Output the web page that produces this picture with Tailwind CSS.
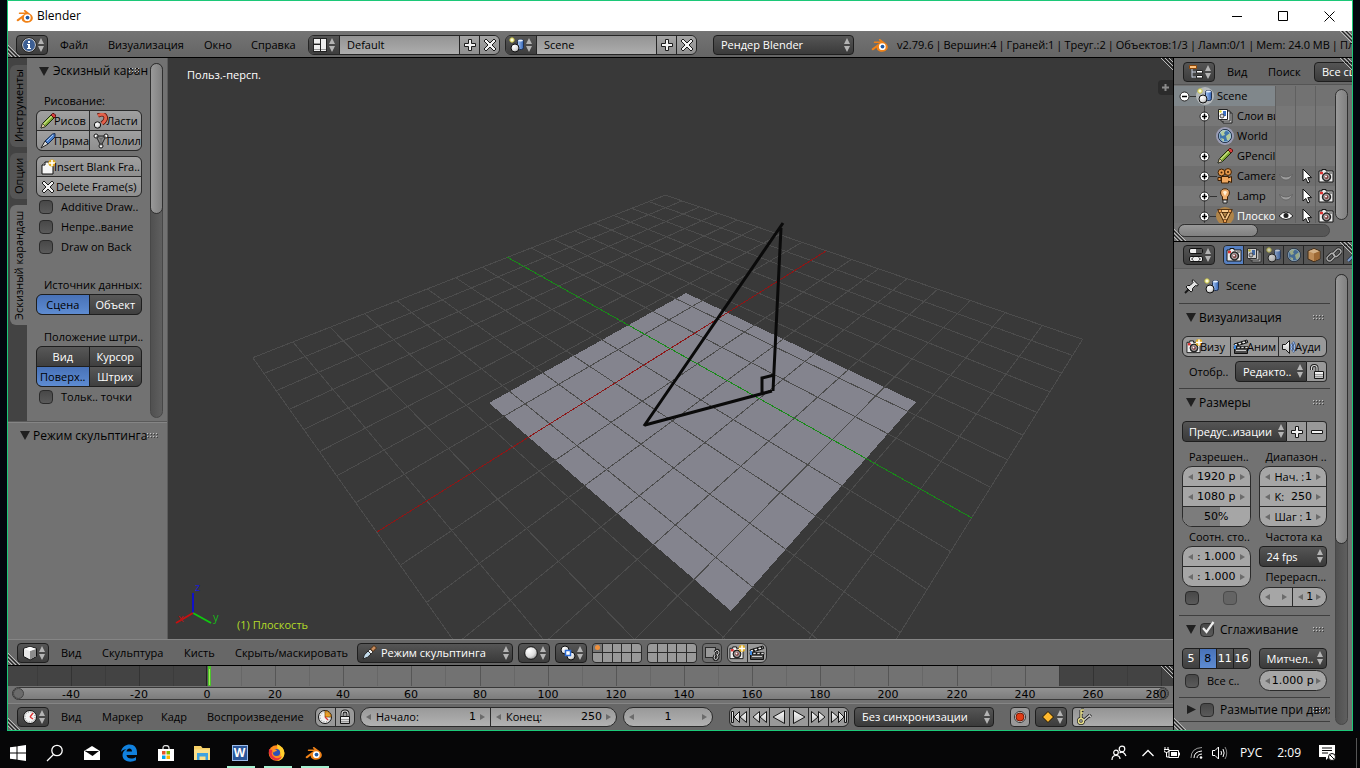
<!DOCTYPE html>
<html lang="ru">
<head>
<meta charset="utf-8">
<title>Blender</title>
<script src="https://cdn.jsdelivr.net/npm/@tailwindcss/browser@4"></script>
</head>
<body class="flex h-screen flex-col overflow-hidden bg-[#03060e] font-['Open_Sans','Noto_Sans',sans-serif] text-[11px] leading-4 text-black select-none">

<svg class="absolute size-0" aria-hidden="true">
  <defs>
    <radialGradient id="ball" cx=".35" cy=".3" r=".8"><stop offset="0" stop-color="#fff"/><stop offset=".6" stop-color="#ddd"/><stop offset="1" stop-color="#888"/></radialGradient>
    <linearGradient id="steel" x1="0" y1="0" x2="0" y2="1"><stop offset="0" stop-color="#fff"/><stop offset="1" stop-color="#bbb"/></linearGradient>
    <linearGradient id="cyl" x1="0" x2="1"><stop offset="0" stop-color="#a9c8f5"/><stop offset="1" stop-color="#2f62b5"/></linearGradient>
    <symbol id="ud" viewBox="0 0 8 14"><path d="M4 0 7 6H1ZM4 14 7 8H1Z" fill="#b4b4b4"/></symbol>
    <symbol id="down" viewBox="0 0 10 9"><path d="M0 0H10L5 9Z" fill="#202020"/></symbol>
    <symbol id="right" viewBox="0 0 10 9"><path d="M1 0V9L10 4.500Z" fill="#202020"/></symbol>
    <symbol id="lt" viewBox="0 0 5 6"><path d="M5 0V6L0 3Z" fill="#6b6b6b"/></symbol>
    <symbol id="rt" viewBox="0 0 5 6"><path d="M0 0V6L5 3Z" fill="#6b6b6b"/></symbol>
    <symbol id="grip" viewBox="0 0 12 6"><path d="M1 1.500h1M4 1.500h1M7 1.500h1M10 1.500h1M1 4.500h1M4 4.500h1M7 4.500h1M10 4.500h1" stroke="#3d3d3d"/><path d="M0 .5h1M3 .5h1M6 .5h1M9 .5h1M0 3.500h1M3 3.500h1M6 3.500h1M9 3.500h1" stroke="#c4c4c4"/></symbol>
    <symbol id="corner" viewBox="0 0 12 12"><path d="M0 0 12 12M4 0 12 8M8 0 12 4" stroke="#bbb" stroke-width="1"/><path d="M2 0 12 10M6 0 12 6" stroke="#222" stroke-width="1"/></symbol>
    <symbol id="cornerbl" viewBox="0 0 12 12"><path d="M0 0 12 12M0 4 8 12M0 8 4 12" stroke="#bbb"/><path d="M0 2 10 12M0 6 6 12" stroke="#222"/></symbol>
    <symbol id="plus" viewBox="0 0 16 16"><path d="M6.500 2.500h3v4h4v3h-4v4h-3v-4h-4v-3h4z" fill="#f2f2f2" stroke="#1a1a1a"/></symbol>
    <symbol id="minus" viewBox="0 0 16 16"><path d="M2.500 6.500h11v3h-11z" fill="#f2f2f2" stroke="#1a1a1a"/></symbol>
    <symbol id="cross" viewBox="0 0 16 16"><path d="m4 2 4 4 4-4 2 2-4 4 4 4-2 2-4-4-4 4-2-2 4-4-4-4z" fill="#f2f2f2" stroke="#1a1a1a"/></symbol>
    <symbol id="info" viewBox="0 0 16 16"><circle cx="8" cy="8" r="6.500" fill="#3d5f94" stroke="#e9e9e9"/><circle cx="8" cy="8" r="7.300" fill="none" stroke="#151515" stroke-width=".7"/><path d="M7 4h2v2H7zM6 7h3v4h1v1H6v-1h1V8H6z" fill="#fff"/></symbol>
    <symbol id="layout" viewBox="0 0 16 16"><rect x="1" y="1" width="14" height="14" fill="#222"/><path d="M2 2h6v5H2zM2 8h6v6H2zM9 2h5v12H9z" fill="#eee"/><path d="M9 12.500h5M2 12.500h6M2 6.500h6" stroke="#999"/></symbol>
    <symbol id="scene" viewBox="0 0 16 16"><rect x="8.500" y="2.500" width="6" height="10" rx="2" fill="url(#cyl)" stroke="#1e2f50"/><ellipse cx="11.500" cy="3.500" rx="2.500" ry="1" fill="#e8f2ff"/><circle cx="6" cy="11" r="4" fill="url(#ball)" stroke="#111"/><circle cx="3" cy="3" r="2.200" fill="#fdfdd8" stroke="#c8c23e"/></symbol>
    <symbol id="blender" viewBox="0 0 18 16"><path d="M1 11.500 8.500 6H3.500c-1 0-1-1.600 0-1.600h6L8 3.200C7.400 2.500 8.300 1.600 9.100 2.100L15 6.500c3.300 2.600 2.200 8-3.700 8.200-3.200.1-5.700-1.900-5.700-4.300L3 12.800c-1.200.9-3-.2-2-1.300z" fill="#f08218"/><circle cx="11.300" cy="9.700" r="3.400" fill="#fff"/><circle cx="11.500" cy="9.600" r="1.900" fill="#1f5aa5"/></symbol>
    <symbol id="pencil" viewBox="0 0 16 16"><path d="M1 15 2.500 10.500 11 2l3 3-8.500 8.500z" fill="#7ea832" stroke="#1c2b08"/><path d="m3 11 8.500-8.500 1 1L4 12z" fill="#c5df7d"/><path d="M1 15l1.500-4.500L5.500 13.500z" fill="#ecd7a8" stroke="#222" stroke-width=".7"/><path d="m11 2 1.500-1.500h1.500L15.500 2v1.500L14 5z" fill="#d8403c" stroke="#511"/></symbol>
    <symbol id="eraser" viewBox="0 0 16 16"><path d="M5 2.500C12-1 16 5 9 10.500" fill="none" stroke="#5a150c" stroke-width="4.500"/><path d="M5 2.500C12-1 16 5 9 10.500" fill="none" stroke="#e2614b" stroke-width="2.800"/><circle cx="4.500" cy="12" r="3.200" fill="url(#ball)" stroke="#111"/></symbol>
    <symbol id="knife" viewBox="0 0 16 16"><path d="M1 15 5 8l3 3z" fill="#ddd" stroke="#222"/><path d="M5 8 12.500 1 15 .5V4L8 11z" fill="#4b80cc" stroke="#14294c"/><path d="m7 8 6-6" stroke="#a8c9f5"/></symbol>
    <symbol id="poly" viewBox="0 0 16 16"><path d="M3 3h10L8 13z" fill="#888" stroke="#222"/><circle cx="3" cy="3" r="2" fill="#fff" stroke="#111"/><circle cx="13" cy="3" r="2" fill="#fff" stroke="#111"/><circle cx="8" cy="13" r="2" fill="#fff" stroke="#111"/><path d="M3 3l5 3 5-3M8 6v7" stroke="#444" stroke-width=".6" fill="none"/></symbol>
    <symbol id="newpage" viewBox="0 0 16 16"><path d="M5 3h8v12H2V6z" fill="#f6f6f6" stroke="#111"/><path d="M5 3v3H2" fill="#ccc" stroke="#111"/><circle cx="12" cy="4" r="3.600" fill="#e0ad20"/><path d="M12 1v6M9 4h6" stroke="#fff" stroke-width="1.600"/></symbol>
    <symbol id="tree" viewBox="0 0 16 16"><path d="M4 5v8.500M4 8h5M4 13h5" stroke="#c4ccdc" fill="none"/><path d="M1.500 1.500h7v3h-7z" fill="#ffc07a" stroke="#8b4608"/><path d="M8.500 6.500h6v2.500h-6zM8.500 11.500h6v2.500h-6z" fill="#fff" stroke="#222"/></symbol>
    <symbol id="rlayers" viewBox="0 0 16 16"><path d="M6 5h9v10H6z" fill="#ccc" stroke="#222"/><path d="M4 3h9v10H4z" fill="#eee" stroke="#222"/><path d="M1.500 1.500h9v10h-9z" fill="#fff" stroke="#222"/><rect x="6" y="3" width="3" height="5" fill="#3c72c4"/><circle cx="5" cy="8" r="2" fill="#ddd" stroke="#222" stroke-width=".8"/><circle cx="3.500" cy="3.500" r="1.200" fill="#e0da30"/></symbol>
    <symbol id="world" viewBox="0 0 16 16"><circle cx="8" cy="8" r="6.500" fill="#3f74ac" stroke="#15263a"/><path d="M3 4q3-3 6-1.500L7 5 8 7 5 8zM9 8l4-3 1 4-2.500 3.500L10 12zM4 10l3 1v2.500q-2 0-3-3.500z" fill="#b5cc9c"/><circle cx="8" cy="8" r="5.700" fill="none" stroke="#b4d4ee" stroke-width=".7"/></symbol>
    <symbol id="moviecam" viewBox="0 0 16 16"><circle cx="4.500" cy="4.500" r="3.400" fill="#e89a4c" stroke="#3f2104"/><circle cx="11" cy="4" r="3.400" fill="#e89a4c" stroke="#3f2104"/><circle cx="4.500" cy="4.500" r="1" fill="#3f2104"/><circle cx="11" cy="4" r="1" fill="#3f2104"/><path d="M4.500 8.500h7v1.500l3-1.500v6l-3-1.500V15h-7z" fill="#f0a860" stroke="#3f2104"/><path d="M1 9.500h3v3H1z" fill="#e89a4c" stroke="#3f2104"/></symbol>
    <symbol id="bulb" viewBox="0 0 16 16"><path d="M8 .8c-5 0-5.600 5-2.500 8V12h5V8.800C13.600 5.800 13 .8 8 .8z" fill="#f0b070" stroke="#3f2104"/><path d="M6 4q2-2 4 0L8 8z" fill="#fff0d8"/><path d="M6 12h4v3H6z" fill="#ddd" stroke="#222"/></symbol>
    <symbol id="mesh" viewBox="0 0 16 16"><path d="M3 3h10L8 13z" fill="none" stroke="#3a1d02" stroke-width="3.500"/><path d="M3 3h10L8 13z" fill="none" stroke="#f5c88c" stroke-width="1.800"/><path d="M1.500 1.500h3v3h-3zM11.500 1.500h3v3h-3zM6.500 11.500h3v3h-3z" fill="#f0a050" stroke="#3a1d02" stroke-width=".6"/></symbol>
    <symbol id="eye" viewBox="0 0 16 16"><path d="M1 8q7-8 14 0-7 7-14 0z" fill="#fff" stroke="#222"/><circle cx="8" cy="7.500" r="2.500" fill="#222"/></symbol>
    <symbol id="eyeoff" viewBox="0 0 16 16"><path d="M1.500 6.500q6.500 5 13 0-2 5.500-6.500 5.500T1.500 6.500z" fill="#9c9c9c" stroke="#5a5a5a" stroke-width=".7"/></symbol>
    <symbol id="cursor" viewBox="0 0 16 16"><path d="M5 1v12l2.800-2.600L9.800 15l2-1-2-4.400h3.700z" fill="#fff" stroke="#111"/></symbol>
    <symbol id="camera" viewBox="0 0 16 16"><path d="M1 3h3V1.500h4V3h7v11H1z" fill="#ececec" stroke="#161616"/><rect x="2" y="3.800" width="3" height="2.500" fill="#d33"/><path d="M11 5h3" stroke="#333"/><circle cx="8.500" cy="9" r="4.200" fill="#444" stroke="#161616"/><circle cx="8.500" cy="9" r="2.600" fill="#7c4040" stroke="#ccc" stroke-width=".8"/><circle cx="8" cy="8.500" r="1" fill="#fff"/></symbol>
    <symbol id="camplus" viewBox="0 0 16 16"><use href="#camera" width="15" height="16"/><circle cx="13" cy="3.500" r="3.400" fill="#e0ad20"/><path d="M13 .5v6M10 3.500h6" stroke="#fff" stroke-width="1.500"/></symbol>
    <symbol id="clap" viewBox="0 0 16 16"><path d="M1.500 8.500h13v6h-13z" fill="#4a4a4a" stroke="#111"/><path d="M3 11.500h10" stroke="#ccc"/><path d="m1 5 13-4 .8 2.500L1.800 7.500z" fill="#eee" stroke="#111"/><path d="m4 4 1.500 2.200M8 3l1.500 2M12 1.700l1.300 2" stroke="#111" stroke-width="1.600"/><path d="M1 7.500h14v2H1z" fill="#ddd" stroke="#111" stroke-width=".7"/><path d="M4 7.500 3 9.500M8 7.500 7 9.500M12 7.500l-1 2" stroke="#111" stroke-width="1.500"/><path d="M1 6h2v4H1z" fill="#3f8ae0"/></symbol>
    <symbol id="sound" viewBox="0 0 16 16"><path d="M1.500 5.500h3l4-4v13l-4-4h-3z" fill="url(#steel)" stroke="#161616"/><path d="M10 5q2 3 0 6M12 3q3.500 5 0 10" stroke="#2a4c86" stroke-width="2.200" fill="none"/><path d="M10 5q2 3 0 6M12 3q3.500 5 0 10" stroke="#a7c7f6" fill="none"/></symbol>
    <symbol id="unlock" viewBox="0 0 16 16"><path d="M2.500 6V4q0-2.500 2.800-2.500T8 4v4" fill="none" stroke="#161616" stroke-width="3"/><path d="M2.500 6V4q0-2.500 2.800-2.500T8 4v4" fill="none" stroke="#ddd" stroke-width="1.200"/><path d="M5.500 7.500h9v7h-9z" fill="url(#steel)" stroke="#161616"/><path d="M6 10.500h8M6 12.500h8" stroke="#999"/></symbol>
    <symbol id="lock" viewBox="0 0 16 16"><path d="M5 8V5q0-3 3-3t3 3v3" fill="none" stroke="#161616" stroke-width="3"/><path d="M5 8V5q0-3 3-3t3 3v3" fill="none" stroke="#ddd" stroke-width="1.200"/><path d="M3.500 7.500h9v7h-9z" fill="url(#steel)" stroke="#161616"/><path d="M4 10.500h8M4 12.500h8" stroke="#999"/></symbol>
    <symbol id="props" viewBox="0 0 16 16"><rect x="1.500" y="1.500" width="13" height="5" rx="1.500" fill="#eee" stroke="#111"/><rect x="8" y="2" width="6" height="4" fill="#555"/><rect x="1.500" y="9.500" width="13" height="5" rx="1.500" fill="#eee" stroke="#111"/><path d="m5.500 10.500-2 1.500 2 1.500M10.500 10.500l2 1.500-2 1.500" fill="none" stroke="#333"/></symbol>
    <symbol id="cubeo" viewBox="0 0 16 16"><path d="M8 1.500 14 4v8l-6 2.800L2 12V4z" fill="#d89a58" stroke="#3c2208"/><path d="M2.500 4.300 8 6.500l5.500-2.200L8 2z" fill="#f3c994"/><path d="M8 6.500v7.800l5.500-2.500V4.300z" fill="#b06f2e"/></symbol>
    <symbol id="chain" viewBox="0 0 16 16"><g fill="none"><g stroke="#222" stroke-width="3"><rect x="7" y="3.500" width="8.500" height="5" rx="2.500" transform="rotate(-45 11 6)"/><rect x=".5" y="7.500" width="8.500" height="5" rx="2.500" transform="rotate(-45 5 10)"/></g><g stroke="#c8c8c8" stroke-width="1.300"><rect x="7" y="3.500" width="8.500" height="5" rx="2.500" transform="rotate(-45 11 6)"/><rect x=".5" y="7.500" width="8.500" height="5" rx="2.500" transform="rotate(-45 5 10)"/></g></g></symbol>
    <symbol id="wrench" viewBox="0 0 16 16"><path d="M2 14 11 5q-1-3 2-4M14 6q-2 1-3-1" fill="none" stroke="#1c2b4a" stroke-width="3.500"/><path d="M2 14 11 5" stroke="#87aee6" stroke-width="2"/></symbol>
    <symbol id="pin" viewBox="0 0 16 16"><path d="m9 1.500 5.500 5.500-1.500 1-1.500-.5-3 3v2.500L7 14 2 9l1.500-1.500H6l3-3L8 3z" fill="#e4e4e4" stroke="#161616"/><path d="M4.500 11.500 1 15" stroke="#161616" stroke-width="1.800"/></symbol>
    <symbol id="cube" viewBox="0 0 16 16"><path d="M8 1.500 14.500 3.500v8L8 15 1.500 11.500v-8z" fill="#e6e6e6" stroke="#111"/><path d="M8 6v8.500l6-3.300V4z" fill="#8d8d8d"/><path d="M2 3.800 8 6l6-2.200-6-2z" fill="#fff"/></symbol>
    <symbol id="brush" viewBox="0 0 16 16"><path d="M2 14q0-4 5-8l3 3q-3 4-8 5z" fill="#c4dcec" stroke="#222"/><path d="m7 6 2-2 3 3-2 2z" fill="#eee" stroke="#333"/><path d="m9.500 4 3.500-3.500 2.500 2.500L12 6.500z" fill="#c98d5d" stroke="#492a10"/></symbol>
    <symbol id="sphere" viewBox="0 0 16 16"><circle cx="8" cy="8" r="6.300" fill="url(#ball)" stroke="#111"/></symbol>
    <symbol id="pivot" viewBox="0 0 16 16"><circle cx="5" cy="5" r="4" fill="url(#ball)" stroke="#111"/><circle cx="11" cy="11" r="4" fill="url(#ball)" stroke="#111"/><rect x="5.500" y="5.500" width="5" height="5" fill="#fff" stroke="#2c6cd6" stroke-width="1.500"/></symbol>
    <symbol id="linkbox" viewBox="0 0 16 16"><rect x="1.500" y="2.500" width="10" height="10" fill="#999" stroke="#2a2a2a"/><path d="M11 7q2-3 3.500-1t-1 4M13 9q2 3 0 5t-3-1l1-3" fill="none" stroke="#222" stroke-width="3"/><path d="M11 7q2-3 3.500-1t-1 4M13 9q2 3 0 5t-3-1l1-3" fill="none" stroke="#ccc"/></symbol>
    <symbol id="clock" viewBox="0 0 16 16"><circle cx="8" cy="8" r="6.500" fill="#f2f2f2" stroke="#111"/><circle cx="8" cy="8" r="5" fill="none" stroke="#888" stroke-dasharray="1 1.600"/><path d="M8 8 11 4M8 8l3 2" stroke="#d33" stroke-width="1.300"/></symbol>
    <symbol id="clockq" viewBox="0 0 16 16"><circle cx="8" cy="8" r="6.500" fill="#f2f2f2" stroke="#111"/><path d="M8 8V1.800A6.200 6.200 0 0 1 14.200 8z" fill="#f0a020" stroke="#7a4400" stroke-width=".7"/><path d="M8 8l3 3" stroke="#d33" stroke-width="1.300"/><circle cx="8" cy="8" r="4.800" fill="none" stroke="#888" stroke-dasharray="1 1.600"/></symbol>
    <symbol id="first" viewBox="0 0 18 14"><path d="M1.500 1.500h2v11h-2zM9.500 1.500v11L4 7zM16.500 1.500v11L10 7z" fill="url(#steel)" stroke="#161616"/></symbol>
    <symbol id="rew" viewBox="0 0 18 14"><path d="M9.500 1.500v11L3 7zM16.500 1.500v11L10 7z" fill="url(#steel)" stroke="#161616"/></symbol>
    <symbol id="back" viewBox="0 0 18 14"><path d="M14.500 .5v13L3 7z" fill="url(#steel)" stroke="#161616"/></symbol>
    <symbol id="rec" viewBox="0 0 16 16"><circle cx="8" cy="8" r="5.500" fill="#d9d9d9" stroke="#333"/><circle cx="8" cy="8" r="4" fill="#e23c14" stroke="#7c1804"/></symbol>
    <symbol id="diamond" viewBox="0 0 16 16"><path d="M8 2.500 13.500 8 8 13.500 2.500 8z" fill="#ffb92e" stroke="#201400"/></symbol>
    <symbol id="keys" viewBox="0 0 18 18"><circle cx="6" cy="13" r="2.500" fill="none" stroke="#222" stroke-width="3"/><path d="M6 11V2M6 2h3M6 5h2M8 13l7-6M14 7l2 2" stroke="#222" stroke-width="3"/><path d="M8 13l7-6M14 7l2 2" stroke="#ccc" stroke-width="1.500"/><circle cx="6" cy="13" r="2.500" fill="none" stroke="#e8e08c" stroke-width="1.500"/><path d="M6 11V2M6 2h3M6 5h2" stroke="#e8e08c" stroke-width="1.500"/></symbol>
  </defs>
</svg>

<main class="mx-[7px] flex min-h-0 flex-1 flex-col overflow-hidden border border-[#1cc878] bg-[#727272]">
  <!-- Title bar -->
  <div class="flex h-[30px] shrink-0 items-center bg-white pl-2 text-xs">
    <svg class="h-4 w-[18px]"><use href="#blender"/></svg>
    <h1 class="ml-[3px] flex-1">Blender</h1>
    <button class="flex h-full w-[46px] items-center justify-center" aria-label="Свернуть"><svg class="size-[11px]" viewBox="0 0 11 11"><path d="M0 5.500h10" stroke="#000"/></svg></button>
    <button class="flex h-full w-[46px] items-center justify-center" aria-label="Развернуть"><svg class="size-[11px]" viewBox="0 0 11 11"><path d="M.5.5h9v9h-9z" fill="none" stroke="#000"/></svg></button>
    <button class="flex h-full w-[46px] items-center justify-center" aria-label="Закрыть"><svg class="size-[11px]" viewBox="0 0 11 11"><path d="m.5.5 10 10m0-10-10 10" stroke="#000"/></svg></button>
  </div>

  <!-- Info header -->
  <header class="relative flex h-[27px] shrink-0 items-center overflow-hidden border-b border-black bg-linear-to-b from-[#747474] to-[#656565] pt-0.5 pl-2 whitespace-nowrap">
    <svg class="absolute bottom-0 left-0 size-3"><use href="#cornerbl"/></svg>
    <svg class="absolute top-0 right-0 size-3"><use href="#corner"/></svg>
    <button class="relative flex h-5 w-8 shrink-0 items-center justify-between rounded border border-[#1e1e1e] bg-linear-to-b from-[#555] to-[#3d3d3d] px-1" aria-label="Тип редактора"><svg class="size-4 shrink-0"><use href="#info"/></svg><svg class="h-3.5 w-2 shrink-0"><use href="#ud"/></svg></button>
    <nav class="ml-3 flex text-left">
      <button class="w-12 text-left">Файл</button><button class="w-24 text-left">Визуализация</button><button class="w-[47px] text-left">Окно</button><button class="w-[57px] text-left">Справка</button>
    </nav>
    <div class="flex h-5 w-[192px] shrink-0 overflow-hidden rounded-md border border-[#252525]">
      <button class="flex w-[31px] items-center justify-between border-r border-[#252525] bg-linear-to-b from-[#555] to-[#3d3d3d] px-[3px]" aria-label="Экраны"><svg class="size-4 shrink-0"><use href="#layout"/></svg><svg class="h-3.5 w-2 shrink-0"><use href="#ud"/></svg></button>
      <input class="w-0 flex-1 bg-linear-to-b from-[#949494] to-[#adadad] px-[7px] outline-none" value="Default" aria-label="Экран">
      <button class="flex w-5 items-center justify-center border-l border-[#252525] bg-linear-to-b from-[#a4a4a4] to-[#8e8e8e]" aria-label="Добавить экран"><svg class="size-4"><use href="#plus"/></svg></button>
      <button class="flex w-5 items-center justify-center border-l border-[#252525] bg-linear-to-b from-[#a4a4a4] to-[#8e8e8e]" aria-label="Удалить экран"><svg class="size-4"><use href="#cross"/></svg></button>
    </div>
    <div class="ml-[5px] flex h-5 w-[192px] shrink-0 overflow-hidden rounded-md border border-[#252525]">
      <button class="flex w-[31px] items-center justify-between border-r border-[#252525] bg-linear-to-b from-[#555] to-[#3d3d3d] px-[3px]" aria-label="Сцены"><svg class="size-4 shrink-0"><use href="#scene"/></svg><svg class="h-3.5 w-2 shrink-0"><use href="#ud"/></svg></button>
      <input class="w-0 flex-1 bg-linear-to-b from-[#949494] to-[#adadad] px-[7px] outline-none" value="Scene" aria-label="Сцена">
      <button class="flex w-5 items-center justify-center border-l border-[#252525] bg-linear-to-b from-[#a4a4a4] to-[#8e8e8e]" aria-label="Добавить сцену"><svg class="size-4"><use href="#plus"/></svg></button>
      <button class="flex w-5 items-center justify-center border-l border-[#252525] bg-linear-to-b from-[#a4a4a4] to-[#8e8e8e]" aria-label="Удалить сцену"><svg class="size-4"><use href="#cross"/></svg></button>
    </div>
    <label class="relative ml-4 h-5 w-[141px] shrink-0"><select class="h-full w-full appearance-none rounded border border-[#1e1e1e] bg-linear-to-b from-[#555] to-[#3a3a3a] px-[7px] text-white" aria-label="Движок рендера"><option>Рендер Blender</option></select><svg class="pointer-events-none absolute top-[3px] right-[3px] h-3.5 w-2"><use href="#ud"/></svg></label>
    <svg class="ml-[17px] h-4 w-[18px] shrink-0"><use href="#blender"/></svg>
    <p class="ml-2 flex gap-0.5"><span>v2.79.6</span><span>|</span><span>Вершин:4</span><span>|</span><span>Граней:1</span><span>|</span><span>Треуг.:2</span><span>|</span><span>Объектов:1/3</span><span>|</span><span>Ламп:0/1</span><span>|</span><span>Mem: 24.0 MB</span><span>|</span><span>Плоскость</span></p>
  </header>

  <div class="flex min-h-0 flex-1">
    <div class="flex min-w-0 flex-1 flex-col">
      <section class="flex min-h-0 flex-1">
        <!-- Tool shelf -->
        <aside class="flex w-40 shrink-0 flex-col overflow-hidden border-r border-[#5c5c5c] bg-[#727272]">
          <div class="flex h-[364px] shrink-0 border-b border-[#5a5a5a]">
            <div class="flex w-[19px] shrink-0 flex-col gap-1.5 bg-[#434343] pt-[7px] pl-0.5">
              <button class="flex h-[82px] w-[17px] rotate-180 items-center justify-center rounded-r-md bg-[#555] [writing-mode:vertical-rl]">Инструменты</button>
              <button class="flex h-[46px] w-[17px] rotate-180 items-center justify-center rounded-r-md bg-[#555] [writing-mode:vertical-rl]">Опции</button>
              <button class="flex h-[120px] w-[17px] rotate-180 items-center justify-center rounded-r-md bg-[#727272] whitespace-nowrap [writing-mode:vertical-rl]">Эскизный карандаш</button>
            </div>
            <div class="flex w-[115px] shrink-0 flex-col whitespace-nowrap">
              <h2 class="relative ml-3 flex h-[26px] w-[110px] shrink-0 items-center gap-1 overflow-hidden text-xs"><svg class="h-[9px] w-[10px] shrink-0"><use href="#down"/></svg>Эскизный каран<svg class="absolute top-2.5 right-2 h-1.5 w-3"><use href="#grip"/></svg></h2>
              <p class="mt-[7px] ml-[17px] h-[19px] pt-0.5">Рисование:</p>
              <div class="ml-[9px] grid h-[41px] w-[106px] grid-cols-2 grid-rows-2 gap-px overflow-hidden rounded-md border border-[#2b2b2b] bg-[#2b2b2b]">
                <button class="flex items-center overflow-hidden bg-linear-to-b from-[#a0a0a0] to-[#8f8f8f] pl-[3px]"><svg class="size-4 shrink-0"><use href="#pencil"/></svg><span class="-ml-0.5">Рисов</span></button>
                <button class="flex items-center overflow-hidden bg-linear-to-b from-[#a0a0a0] to-[#8f8f8f] pl-[3px]"><svg class="size-4 shrink-0"><use href="#eraser"/></svg><span class="-ml-0.5">Ласти</span></button>
                <button class="flex items-center overflow-hidden bg-linear-to-b from-[#a0a0a0] to-[#8f8f8f] pl-[3px]"><svg class="size-4 shrink-0"><use href="#knife"/></svg><span class="-ml-0.5">Пряма</span></button>
                <button class="flex items-center overflow-hidden bg-linear-to-b from-[#a0a0a0] to-[#8f8f8f] pl-[3px]"><svg class="size-4 shrink-0"><use href="#poly"/></svg><span class="-ml-0.5">Полил</span></button>
              </div>
              <div class="mt-[5px] ml-[9px] grid h-[41px] w-[106px] grid-rows-2 gap-px overflow-hidden rounded-md border border-[#2b2b2b] bg-[#2b2b2b]">
                <button class="flex items-center overflow-hidden bg-linear-to-b from-[#a0a0a0] to-[#8f8f8f] pl-[3px]"><svg class="size-4 shrink-0"><use href="#newpage"/></svg><span class="-ml-0.5">Insert Blank Fra..</span></button>
                <button class="flex items-center overflow-hidden bg-linear-to-b from-[#a0a0a0] to-[#8f8f8f] pl-[3px]"><svg class="size-4 shrink-0"><use href="#cross"/></svg><span>Delete Frame(s)</span></button>
              </div>
              <label class="ml-3 flex h-5 items-center gap-2"><input type="checkbox" class="size-3.5 shrink-0 appearance-none rounded border border-[#2b2b2b] bg-linear-to-b from-[#484848] to-[#5a5a5a]">Additive Draw..</label>
              <label class="ml-3 flex h-5 items-center gap-2"><input type="checkbox" class="size-3.5 shrink-0 appearance-none rounded border border-[#2b2b2b] bg-linear-to-b from-[#484848] to-[#5a5a5a]">Непре..вание</label>
              <label class="ml-3 flex h-5 items-center gap-2"><input type="checkbox" class="size-3.5 shrink-0 appearance-none rounded border border-[#2b2b2b] bg-linear-to-b from-[#484848] to-[#5a5a5a]">Draw on Back</label>
              <p class="mt-[18px] ml-[17px] h-[19px] pt-0.5">Источник данных:</p>
              <div class="ml-[9px] grid h-[21px] w-[106px] grid-cols-2 gap-px overflow-hidden rounded-md border border-[#1e1e1e] bg-[#1e1e1e] text-white">
                <button class="bg-linear-to-b from-[#4872b8] to-[#5e8cd2] text-black">Сцена</button><button class="bg-linear-to-b from-[#585858] to-[#3f3f3f]">Объект</button>
              </div>
              <p class="mt-3 ml-[17px] h-[19px] pt-0.5">Положение штри..</p>
              <div class="ml-[9px] grid h-[41px] w-[106px] grid-cols-2 grid-rows-2 gap-px overflow-hidden rounded-md border border-[#1e1e1e] bg-[#1e1e1e] text-white">
                <button class="bg-linear-to-b from-[#585858] to-[#3f3f3f]">Вид</button><button class="bg-linear-to-b from-[#585858] to-[#3f3f3f]">Курсор</button>
                <button class="bg-linear-to-b from-[#4872b8] to-[#5e8cd2] text-black">Поверх..</button><button class="bg-linear-to-b from-[#585858] to-[#3f3f3f]">Штрих</button>
              </div>
              <label class="ml-3 flex h-5 items-center gap-2"><input type="checkbox" class="size-3.5 shrink-0 appearance-none rounded border border-[#2b2b2b] bg-linear-to-b from-[#484848] to-[#5a5a5a]">Тольк.. точки</label>
            </div>
            <div class="my-[5px] ml-2 h-[355px] w-[13px] rounded-full border border-[#474747] bg-linear-to-r from-[#505050] to-[#5f5f5f]"><div class="-m-px h-[151px] w-[13px] rounded-full border border-[#303030] bg-linear-to-r from-[#999] to-[#808080]"></div></div>
          </div>
          <h2 class="flex h-[26px] items-center gap-[3px] border-t border-[#858585] pl-3 text-xs whitespace-nowrap"><svg class="h-[9px] w-[10px] shrink-0"><use href="#down"/></svg>Режим скульптинга<svg class="-ml-[3px] h-1.5 w-3 shrink-0"><use href="#grip"/></svg></h2>
        </aside>

        <!-- 3D viewport -->
        <div class="relative min-w-0 flex-1 overflow-hidden bg-[#393939]">
          <svg class="h-full w-full" viewBox="168 58 1005 581" preserveAspectRatio="xMidYMid slice">
            <path d="M686 293 916 402 731 611 489 403Z" fill="#84848e" shape-rendering="crispEdges"/>
            <path id="grid" fill="none" stroke="#4c4c4c" shape-rendering="crispEdges"/>
            <path d="M826 251 377 532" stroke="#8e1616" shape-rendering="crispEdges"/>
            <path d="M507 257 972 518" stroke="#188a18" shape-rendering="crispEdges"/>
            <path d="M783 223 644 426M781 228 773 391M645 425 772 391M762 394V378L774 375" fill="none" stroke="#0a0a0a" stroke-width="3"/>
            <g fill="none" stroke-width="2"><path d="M193 613V593" stroke="#1010c8"/><path d="M193 613 211 623" stroke="#10c810"/><path d="M193 613 176 623" stroke="#c81010"/></g>
            <text x="195" y="591" fill="#1818d8" font-size="11">z</text>
            <text x="213" y="621" fill="#18b818" font-size="11">y</text>
            <text x="178" y="622" fill="#b81414" font-size="11">x</text>
            <text x="187" y="79" fill="#fff" font-size="11">Польз.-персп.</text>
            <text x="237" y="629" fill="#b4dc28" font-size="11">(1) Плоскость</text>
          </svg>
          <svg class="absolute top-0 right-0 size-3"><use href="#corner"/></svg>
          <button class="absolute top-[22px] right-0 flex h-[15px] w-[15px] items-center justify-center rounded-l bg-[#2b2b2b]" aria-label="Панель свойств"><svg class="size-[7px]" viewBox="0 0 7 7"><path d="M3.500 0v7M0 3.500h7" stroke="#8a8a8a" stroke-width="2"/></svg></button>
        </div>
      </section>

      <!-- 3D view header -->
      <header class="relative flex h-[27px] shrink-0 items-center overflow-hidden border-t border-b border-t-[#858585] border-b-black bg-[#676767] pl-[9px] whitespace-nowrap">
        <svg class="absolute bottom-0 left-0 size-3"><use href="#cornerbl"/></svg>
        <button class="relative flex h-5 w-8 shrink-0 items-center justify-between rounded border border-[#1e1e1e] bg-linear-to-b from-[#555] to-[#3d3d3d] px-1" aria-label="Тип редактора"><svg class="size-4 shrink-0"><use href="#cube"/></svg><svg class="h-3.5 w-2 shrink-0"><use href="#ud"/></svg></button>
        <nav class="ml-3 flex"><button class="w-[41px] text-left">Вид</button><button class="w-[82px] text-left">Скульптура</button><button class="w-[51px] text-left">Кисть</button><button class="w-[122px] text-left">Скрыть/маскировать</button></nav>
        <label class="relative h-5 w-[156px] shrink-0"><select class="h-full w-full appearance-none rounded border border-[#1e1e1e] bg-linear-to-b from-[#555] to-[#3a3a3a] pr-3 pl-[23px] text-white" aria-label="Режим"><option>Режим скульптинга</option></select><svg class="pointer-events-none absolute top-0.5 left-1 size-4"><use href="#brush"/></svg><svg class="pointer-events-none absolute top-[3px] right-[3px] h-3.5 w-2"><use href="#ud"/></svg></label>
        <button class="ml-[5px] flex h-5 w-8 shrink-0 items-center justify-between rounded border border-[#1e1e1e] bg-linear-to-b from-[#555] to-[#3d3d3d] px-1" aria-label="Затенение"><svg class="size-4 shrink-0"><use href="#sphere"/></svg><svg class="h-3.5 w-2 shrink-0"><use href="#ud"/></svg></button>
        <button class="ml-[5px] flex h-5 w-8 shrink-0 items-center justify-between rounded border border-[#1e1e1e] bg-linear-to-b from-[#555] to-[#3d3d3d] px-1" aria-label="Опорная точка"><svg class="size-4 shrink-0"><use href="#pivot"/></svg><svg class="h-3.5 w-2 shrink-0"><use href="#ud"/></svg></button>
        <div class="ml-[5px] grid h-5 w-[50px] shrink-0 grid-cols-5 grid-rows-2 gap-px overflow-hidden rounded border border-[#2b2b2b] bg-[#2b2b2b]">
          <button class="flex items-center justify-center bg-[#777]" aria-label="Слой 1"><i class="size-[5px] rounded-full bg-[#f0903c]"></i></button><button class="bg-[#999]" aria-label="Слой 2"></button><button class="bg-[#999]" aria-label="Слой 3"></button><button class="bg-[#999]" aria-label="Слой 4"></button><button class="bg-[#999]" aria-label="Слой 5"></button><button class="bg-[#999]" aria-label="Слой 11"></button><button class="bg-[#999]" aria-label="Слой 12"></button><button class="bg-[#999]" aria-label="Слой 13"></button><button class="bg-[#999]" aria-label="Слой 14"></button><button class="bg-[#999]" aria-label="Слой 15"></button>
        </div>
        <div class="ml-[5px] grid h-5 w-[50px] shrink-0 grid-cols-5 grid-rows-2 gap-px overflow-hidden rounded border border-[#2b2b2b] bg-[#2b2b2b]">
          <button class="bg-[#999]" aria-label="Слой 6"></button><button class="bg-[#999]" aria-label="Слой 7"></button><button class="bg-[#999]" aria-label="Слой 8"></button><button class="bg-[#999]" aria-label="Слой 9"></button><button class="bg-[#999]" aria-label="Слой 10"></button><button class="bg-[#999]" aria-label="Слой 16"></button><button class="bg-[#999]" aria-label="Слой 17"></button><button class="bg-[#999]" aria-label="Слой 18"></button><button class="bg-[#999]" aria-label="Слой 19"></button><button class="bg-[#999]" aria-label="Слой 20"></button>
        </div>
        <button class="ml-[5px] flex h-5 w-5 shrink-0 items-center justify-center rounded border border-[#333] bg-[#6e6e6e]" aria-label="Связать слои"><svg class="size-4"><use href="#linkbox"/></svg></button>
        <div class="ml-[5px] flex h-5 w-10 shrink-0 overflow-hidden rounded-md border border-[#2b2b2b] bg-[#999]">
          <button class="flex flex-1 items-center justify-center border-r border-[#2b2b2b]" aria-label="Рендер"><svg class="size-4"><use href="#camplus"/></svg></button><button class="flex flex-1 items-center justify-center" aria-label="Анимация"><svg class="size-4"><use href="#clap"/></svg></button>
        </div>
      </header>

      <!-- Timeline -->
      <div class="relative h-[37px] shrink-0 overflow-hidden bg-[#727272] font-['DejaVu_Sans',sans-serif]">
        <svg class="h-[37px] w-full" aria-hidden="true">
          <rect width="198" height="20" fill="#434343"/><rect x="1051" width="2000" height="20" fill="#434343"/>
          <path id="tick10" stroke="#000" stroke-opacity=".09"/><path id="tick20" stroke="#000" stroke-opacity=".24"/>
          <path d="M198.500 0V20" stroke="#222"/><rect x="200" width="3" height="20" fill="#4cc02c"/><path d="M201.500 3V19" stroke="#9cf050"/>
        </svg>
        <div class="absolute inset-x-1 top-[21px] h-[13px] rounded-full border border-[#383838] bg-linear-to-b from-[#929292] to-[#7c7c7c]"><i class="absolute top-0 left-0 size-[11px] rounded-full border border-[#444] bg-[#6b6b6b]"></i><i class="absolute top-0 right-0 size-[11px] rounded-full border border-[#444] bg-[#6b6b6b]"></i></div>
        <svg class="absolute inset-x-0 top-[21px] h-[13px] w-full" id="labels" font-size="11" text-anchor="middle"></svg>
        <svg class="absolute top-0 right-0 size-3"><use href="#corner"/></svg>
      </div>

      <!-- Timeline header -->
      <footer class="relative flex h-[27px] shrink-0 items-center overflow-hidden border-t border-[#858585] bg-[#676767] pl-[9px] whitespace-nowrap">
        <svg class="absolute bottom-0 left-0 size-3"><use href="#cornerbl"/></svg>
        <button class="relative flex h-5 w-8 shrink-0 items-center justify-between rounded border border-[#1e1e1e] bg-linear-to-b from-[#555] to-[#3d3d3d] px-1" aria-label="Тип редактора"><svg class="size-4 shrink-0"><use href="#clock"/></svg><svg class="h-3.5 w-2 shrink-0"><use href="#ud"/></svg></button>
        <nav class="ml-3 flex"><button class="w-[41px] text-left">Вид</button><button class="w-[59px] text-left">Маркер</button><button class="w-[46px] text-left">Кадр</button><button class="w-[108px] text-left">Воспроизведение</button></nav>
        <div class="flex h-5 w-10 shrink-0 overflow-hidden rounded-md border border-[#2b2b2b] bg-[#999]">
          <button class="flex flex-1 items-center justify-center border-r border-[#2b2b2b]" aria-label="Диапазон предпросмотра"><svg class="size-4"><use href="#clockq"/></svg></button><button class="flex flex-1 items-center justify-center" aria-label="Блокировка"><svg class="size-4"><use href="#lock"/></svg></button>
        </div>
        <div class="ml-[5px] flex h-5 w-[257px] shrink-0 overflow-hidden rounded-full border border-[#2b2b2b] bg-linear-to-b from-[#999] to-[#b2b2b2]">
          <label class="flex w-[130px] items-center border-r border-[#2b2b2b] px-[5px]"><svg class="h-1.5 w-[5px]"><use href="#lt"/></svg><span class="ml-[5px]">Начало:</span><input class="mr-1 w-0 flex-1 bg-transparent text-right font-['DejaVu_Sans'] outline-none" value="1"><svg class="h-1.5 w-[5px]"><use href="#rt"/></svg></label>
          <label class="flex flex-1 items-center px-[5px]"><svg class="h-1.5 w-[5px]"><use href="#lt"/></svg><span class="ml-[5px]">Конец:</span><input class="mr-1 w-0 flex-1 bg-transparent text-right font-['DejaVu_Sans'] outline-none" value="250"><svg class="h-1.5 w-[5px]"><use href="#rt"/></svg></label>
        </div>
        <label class="ml-1.5 flex h-5 w-[90px] shrink-0 items-center rounded-full border border-[#2b2b2b] bg-linear-to-b from-[#999] to-[#b2b2b2] px-[5px]"><svg class="h-1.5 w-[5px]"><use href="#lt"/></svg><input class="w-0 flex-1 bg-transparent text-center font-['DejaVu_Sans'] outline-none" value="1" aria-label="Текущий кадр"><svg class="h-1.5 w-[5px]"><use href="#rt"/></svg></label>
        <div class="ml-4 grid h-5 w-[120px] shrink-0 grid-cols-6 gap-px overflow-hidden rounded-md border border-[#2b2b2b] bg-[#2b2b2b]">
          <button class="flex items-center justify-center bg-[#999]" aria-label="В начало"><svg class="h-3.5 w-[18px]"><use href="#first"/></svg></button>
          <button class="flex items-center justify-center bg-[#999]" aria-label="Предыдущий ключ"><svg class="h-3.5 w-[18px]"><use href="#rew"/></svg></button>
          <button class="flex items-center justify-center bg-[#999]" aria-label="Назад"><svg class="h-3.5 w-[18px]"><use href="#back"/></svg></button>
          <button class="flex items-center justify-center bg-[#999]" aria-label="Играть"><svg class="h-3.5 w-[18px] -scale-x-100"><use href="#back"/></svg></button>
          <button class="flex items-center justify-center bg-[#999]" aria-label="Следующий ключ"><svg class="h-3.5 w-[18px] -scale-x-100"><use href="#rew"/></svg></button>
          <button class="flex items-center justify-center bg-[#999]" aria-label="В конец"><svg class="h-3.5 w-[18px] -scale-x-100"><use href="#first"/></svg></button>
        </div>
        <label class="relative ml-[5px] h-5 w-[140px] shrink-0"><select class="h-full w-full appearance-none rounded border border-[#1e1e1e] bg-linear-to-b from-[#555] to-[#3a3a3a] px-[7px] text-white" aria-label="Синхронизация"><option>Без синхронизации</option></select><svg class="pointer-events-none absolute top-[3px] right-[3px] h-3.5 w-2"><use href="#ud"/></svg></label>
        <button class="ml-4 flex h-5 w-5 shrink-0 items-center justify-center rounded border border-[#2b2b2b] bg-[#999]" aria-label="Запись"><svg class="size-4"><use href="#rec"/></svg></button>
        <button class="ml-[5px] flex h-5 w-8 shrink-0 items-center justify-between rounded border border-[#1e1e1e] bg-linear-to-b from-[#555] to-[#3d3d3d] px-1" aria-label="Тип ключа"><svg class="size-4 shrink-0"><use href="#diamond"/></svg><svg class="h-3.5 w-2 shrink-0"><use href="#ud"/></svg></button>
        <label class="ml-[5px] flex h-5 min-w-0 flex-1 items-center rounded-l border border-r-0 border-[#2b2b2b] bg-linear-to-b from-[#949494] to-[#adadad] pl-0.5"><svg class="size-[18px] shrink-0"><use href="#keys"/></svg><input class="w-0 flex-1 bg-transparent outline-none" aria-label="Набор ключей"></label>
      </footer>
    </div>

    <!-- Right column -->
    <div class="flex w-[179px] shrink-0 flex-col overflow-hidden border-l border-black whitespace-nowrap">
      <header class="relative flex h-[27px] shrink-0 items-center overflow-hidden border-b border-[#555] bg-[#676767] pt-px pl-[9px]">
        <button class="flex h-5 w-8 shrink-0 items-center justify-between rounded border border-[#1e1e1e] bg-linear-to-b from-[#555] to-[#3d3d3d] px-1" aria-label="Тип редактора"><svg class="size-4 shrink-0"><use href="#tree"/></svg><svg class="h-3.5 w-2 shrink-0"><use href="#ud"/></svg></button>
        <nav class="ml-3 flex"><button class="w-[41px] text-left">Вид</button><button class="w-[46px] text-left">Поиск</button></nav>
        <select class="h-5 w-[100px] shrink-0 appearance-none rounded border border-[#1e1e1e] bg-linear-to-b from-[#555] to-[#3a3a3a] px-[7px] text-white" aria-label="Фильтр"><option>Все сцены</option></select>
        <svg class="absolute top-0 right-0 size-3"><use href="#corner"/></svg>
      </header>
      <div class="relative flex h-[157px] shrink-0 flex-col border-b border-black">
        <div class="flex h-[138px] pt-px">
          <ul class="relative flex-1 overflow-hidden">
            <li class="flex h-5 items-center"><div class="flex h-full w-[101px] items-center overflow-hidden bg-[#80878b] pl-[5px]"><svg class="size-[11px] shrink-0" viewBox="0 0 11 11"><circle cx="5.500" cy="5.500" r="4.500" fill="#fff" stroke="#222"/><path d="M3 5.500h5" stroke="#000" stroke-width="1.500"/></svg><i class="h-px w-1.5 shrink-0 bg-[#333]"></i><span class="flex size-[18px] shrink-0 items-center justify-center rounded-full bg-[#b4b8ba]"><svg class="size-4"><use href="#scene"/></svg></span><span class="ml-[3px]">Scene</span></div></li>
            <li class="flex h-5 items-center bg-[#777]"><div class="flex w-[101px] items-center overflow-hidden pl-[25px]"><svg class="size-[11px] shrink-0" viewBox="0 0 11 11"><circle cx="5.500" cy="5.500" r="4.500" fill="#fff" stroke="#222"/><path d="M3 5.500h5M5.500 3v5" stroke="#000" stroke-width="1.500"/></svg><svg class="ml-[7px] size-4 shrink-0"><use href="#rlayers"/></svg><span class="ml-1">Слои визуализации</span></div></li>
            <li class="flex h-5 items-center bg-[#6e6e6e]"><div class="flex w-[101px] items-center overflow-hidden pl-[42px]"><span class="flex size-[18px] shrink-0 items-center justify-center rounded-full bg-[#9a9cb4]"><svg class="size-4"><use href="#world"/></svg></span><span class="ml-[3px]">World</span></div></li>
            <li class="flex h-5 items-center bg-[#777]"><div class="flex w-[101px] items-center overflow-hidden pl-[25px]"><svg class="size-[11px] shrink-0" viewBox="0 0 11 11"><circle cx="5.500" cy="5.500" r="4.500" fill="#fff" stroke="#222"/><path d="M3 5.500h5M5.500 3v5" stroke="#000" stroke-width="1.500"/></svg><svg class="ml-[7px] size-4 shrink-0"><use href="#pencil"/></svg><span class="ml-1">GPencil</span></div></li>
            <li class="flex h-5 items-center bg-[#6e6e6e]"><div class="flex w-[101px] items-center overflow-hidden pl-[25px]"><svg class="size-[11px] shrink-0" viewBox="0 0 11 11"><circle cx="5.500" cy="5.500" r="4.500" fill="#fff" stroke="#222"/><path d="M3 5.500h5M5.500 3v5" stroke="#000" stroke-width="1.500"/></svg><i class="h-px w-[7px] shrink-0 bg-[#333]"></i><svg class="size-4 shrink-0"><use href="#moviecam"/></svg><span class="ml-1">Camera</span></div><svg class="ml-[3px] size-4"><use href="#eyeoff"/></svg><svg class="ml-1 size-4"><use href="#cursor"/></svg><svg class="ml-1 size-4"><use href="#camera"/></svg></li>
            <li class="flex h-5 items-center bg-[#777]"><div class="flex w-[101px] items-center overflow-hidden pl-[25px]"><svg class="size-[11px] shrink-0" viewBox="0 0 11 11"><circle cx="5.500" cy="5.500" r="4.500" fill="#fff" stroke="#222"/><path d="M3 5.500h5M5.500 3v5" stroke="#000" stroke-width="1.500"/></svg><i class="h-px w-[7px] shrink-0 bg-[#333]"></i><svg class="size-4 shrink-0"><use href="#bulb"/></svg><span class="ml-1">Lamp</span></div><svg class="ml-[3px] size-4"><use href="#eyeoff"/></svg><svg class="ml-1 size-4"><use href="#cursor"/></svg><svg class="ml-1 size-4"><use href="#camera"/></svg></li>
            <li class="flex h-5 items-center bg-[#6e6e6e]"><div class="flex w-[101px] items-center overflow-hidden pl-[25px] text-white"><svg class="size-[11px] shrink-0" viewBox="0 0 11 11"><circle cx="5.500" cy="5.500" r="4.500" fill="#fff" stroke="#222"/><path d="M3 5.500h5M5.500 3v5" stroke="#000" stroke-width="1.500"/></svg><i class="h-px w-1.5 shrink-0 bg-[#333]"></i><span class="flex size-[18px] shrink-0 items-center justify-center rounded-full bg-[#b08448]"><svg class="size-4"><use href="#mesh"/></svg></span><span class="ml-[3px]">Плоскость</span></div><svg class="ml-[3px] size-4"><use href="#eye"/></svg><svg class="ml-1 size-4"><use href="#cursor"/></svg><svg class="ml-1 size-4"><use href="#camera"/></svg></li>
            <li class="absolute top-5 bottom-0 left-[30px] w-px bg-black/40" aria-hidden="true"></li>
            <li class="absolute inset-y-0 left-[101px] w-[21px] border-x border-[#606060]" aria-hidden="true"></li>
            <li class="absolute inset-y-0 left-[141px] w-px bg-[#606060]" aria-hidden="true"></li>
          </ul>
          <div class="mt-[3px] mr-1 h-[131px] w-[13px] shrink-0 rounded-full border border-[#303030] bg-linear-to-r from-[#999] to-[#808080]"></div>
        </div>
        <div class="mt-px mr-[22px] ml-1 h-[13px] rounded-full border border-[#474747] bg-[#565656]"><div class="-m-px h-[13px] w-20 rounded-full border border-[#303030] bg-linear-to-b from-[#999] to-[#808080]"></div></div>
        <svg class="absolute bottom-0 left-0 size-3"><use href="#cornerbl"/></svg>
      </div>

      <header class="relative flex h-[27px] shrink-0 items-center overflow-hidden border-b border-[#5a5a5a] bg-[#676767] pl-[9px]">
        <button class="flex h-5 w-8 shrink-0 items-center justify-between rounded border border-[#1e1e1e] bg-linear-to-b from-[#555] to-[#3d3d3d] px-1" aria-label="Тип редактора"><svg class="size-4 shrink-0"><use href="#props"/></svg><svg class="h-3.5 w-2 shrink-0"><use href="#ud"/></svg></button>
        <div class="ml-2 flex h-5 shrink-0 overflow-hidden rounded-l border border-[#252525] bg-[#555]">
          <button class="flex w-5 items-center justify-center border-r border-[#252525] bg-[#5680c2]" aria-label="Рендер"><svg class="size-4"><use href="#camera"/></svg></button>
          <button class="flex w-5 items-center justify-center border-r border-[#252525]" aria-label="Слои рендера"><svg class="size-4 opacity-70"><use href="#rlayers"/></svg></button>
          <button class="flex w-5 items-center justify-center border-r border-[#252525]" aria-label="Сцена"><svg class="size-4 opacity-70"><use href="#scene"/></svg></button>
          <button class="flex w-5 items-center justify-center border-r border-[#252525]" aria-label="Мир"><svg class="size-4 opacity-70"><use href="#world"/></svg></button>
          <button class="flex w-5 items-center justify-center border-r border-[#252525]" aria-label="Объект"><svg class="size-4 opacity-80"><use href="#cubeo"/></svg></button>
          <button class="flex w-5 items-center justify-center border-r border-[#252525]" aria-label="Ограничения"><svg class="size-4 opacity-80"><use href="#chain"/></svg></button>
          <button class="flex w-5 items-center justify-center" aria-label="Модификаторы"><svg class="size-4 opacity-80"><use href="#wrench"/></svg></button>
        </div>
        <svg class="absolute top-0 right-0 size-3"><use href="#corner"/></svg>
      </header>

      <div class="relative flex min-h-0 flex-1">
        <div class="min-w-0 flex-1 overflow-hidden pl-[5px]">
          <div class="flex h-[34px] items-center pl-[5px]"><svg class="size-4"><use href="#pin"/></svg><svg class="ml-1 size-4"><use href="#scene"/></svg><span class="ml-1.5">Scene</span></div>

          <section class="border-t border-[#3f3f3f]">
            <h2 class="flex h-[27px] items-center gap-[3px] pr-[5px] pl-[7px] text-xs"><svg class="h-[9px] w-[10px]"><use href="#down"/></svg><span class="flex-1">Визуализация</span><svg class="h-1.5 w-3"><use href="#grip"/></svg></h2>
            <div class="mx-[3px] mt-[5px] grid h-[21px] grid-cols-3 gap-px overflow-hidden rounded-md border border-[#2b2b2b] bg-[#2b2b2b]">
              <button class="flex items-center overflow-hidden bg-[#999] pl-[3px]"><svg class="size-4 shrink-0"><use href="#camplus"/></svg><span class="-ml-0.5">Визу</span></button>
              <button class="flex items-center overflow-hidden bg-[#999] pl-0.5"><svg class="size-4 shrink-0"><use href="#clap"/></svg><span class="-ml-0.5">Аним</span></button>
              <button class="flex items-center overflow-hidden bg-[#999] pl-0.5"><svg class="size-4 shrink-0"><use href="#sound"/></svg><span class="-ml-0.5">Ауди</span></button>
            </div>
            <div class="mx-[3px] mt-1 mb-1.5 flex h-[21px] items-center">
              <label for="disp" class="w-[53px] pl-[7px]">Отобр..</label>
              <div class="relative h-full flex-1"><select id="disp" class="h-full w-full appearance-none rounded-l border border-[#1e1e1e] bg-linear-to-b from-[#555] to-[#3a3a3a] pl-[7px] text-white"><option>Редакто..</option></select><svg class="pointer-events-none absolute top-[3px] right-[3px] h-3.5 w-2"><use href="#ud"/></svg></div>
              <button class="flex h-full w-5 items-center justify-center rounded-r border border-l-0 border-[#2b2b2b] bg-[#999]" aria-label="Блокировка интерфейса"><svg class="size-4"><use href="#unlock"/></svg></button>
            </div>
          </section>

          <section class="border-t border-[#3f3f3f]">
            <h2 class="flex h-[27px] items-center gap-[3px] pr-[5px] pl-[7px] text-xs"><svg class="h-[9px] w-[10px]"><use href="#down"/></svg><span class="flex-1">Размеры</span><svg class="h-1.5 w-3"><use href="#grip"/></svg></h2>
            <div class="mx-[3px] mt-[5px] flex h-[21px]">
              <div class="relative flex-1"><select aria-label="Предустановки визуализации" class="h-full w-full appearance-none rounded-l border border-[#1e1e1e] bg-linear-to-b from-[#555] to-[#3a3a3a] pl-1.5 text-white"><option>Предус..изации</option></select><svg class="pointer-events-none absolute top-[3px] right-0.5 h-3.5 w-2"><use href="#ud"/></svg></div>
              <button class="flex w-5 items-center justify-center border-y border-r border-[#2b2b2b] bg-[#999]" aria-label="Добавить"><svg class="size-4"><use href="#plus"/></svg></button>
              <button class="flex w-5 items-center justify-center rounded-r border border-l-0 border-[#2b2b2b] bg-[#999]" aria-label="Удалить"><svg class="size-4"><use href="#minus"/></svg></button>
            </div>
            <div class="mx-[3px] mt-[5px] mb-2 grid grid-cols-2 gap-x-2">
              <p class="h-[19px] pt-0.5 pl-[7px]">Разрешен..</p><p class="h-[19px] pt-0.5 pl-[7px]">Диапазон ..</p>
              <div class="flex h-[61px] flex-col overflow-hidden rounded-[10px] border border-[#2b2b2b] bg-[#a6a6a6] font-['DejaVu_Sans',sans-serif]">
                <label class="flex h-5 items-center border-b border-[#2b2b2b] px-[5px]"><svg class="h-1.5 w-[5px]"><use href="#lt"/></svg><input class="w-0 flex-1 bg-transparent text-center outline-none" value="1920 p" aria-label="Ширина"><svg class="h-1.5 w-[5px]"><use href="#rt"/></svg></label>
                <label class="flex h-5 items-center border-b border-[#2b2b2b] px-[5px]"><svg class="h-1.5 w-[5px]"><use href="#lt"/></svg><input class="w-0 flex-1 bg-transparent text-center outline-none" value="1080 p" aria-label="Высота"><svg class="h-1.5 w-[5px]"><use href="#rt"/></svg></label>
                <input class="w-full flex-1 bg-linear-to-r from-[#7c7c7c] from-55% to-[#a6a6a6] to-55% text-center outline-none" value="50%" aria-label="Масштаб">
              </div>
              <div class="flex h-[61px] flex-col overflow-hidden rounded-[10px] border border-[#2b2b2b] bg-[#a6a6a6]">
                <label class="flex h-5 items-center border-b border-[#2b2b2b] px-[5px]"><svg class="h-1.5 w-[5px]"><use href="#lt"/></svg><span class="ml-[5px]">Нач. :</span><input class="mr-1 w-0 flex-1 bg-transparent text-right font-['DejaVu_Sans'] outline-none" value="1"><svg class="h-1.5 w-[5px]"><use href="#rt"/></svg></label>
                <label class="flex h-5 items-center border-b border-[#2b2b2b] px-[5px]"><svg class="h-1.5 w-[5px]"><use href="#lt"/></svg><span class="ml-[5px]">K:</span><input class="mr-1 w-0 flex-1 bg-transparent text-right font-['DejaVu_Sans'] outline-none" value="250"><svg class="h-1.5 w-[5px]"><use href="#rt"/></svg></label>
                <label class="flex flex-1 items-center px-[5px]"><svg class="h-1.5 w-[5px]"><use href="#lt"/></svg><span class="ml-[5px]">Шаг :</span><input class="mr-1 w-0 flex-1 bg-transparent text-right font-['DejaVu_Sans'] outline-none" value="1"><svg class="h-1.5 w-[5px]"><use href="#rt"/></svg></label>
              </div>
              <p class="h-[19px] pt-0.5 pl-[7px]">Соотн. сто..</p><p class="h-[19px] pt-0.5 pl-[7px]">Частота ка</p>
              <div>
                <div class="flex h-[41px] flex-col overflow-hidden rounded-[10px] border border-[#2b2b2b] bg-[#a6a6a6] font-['DejaVu_Sans',sans-serif]">
                  <label class="flex h-5 items-center border-b border-[#2b2b2b] px-[5px]"><svg class="h-1.5 w-[5px]"><use href="#lt"/></svg><input class="w-0 flex-1 bg-transparent text-center outline-none" value=": 1.000" aria-label="Соотношение X"><svg class="h-1.5 w-[5px]"><use href="#rt"/></svg></label>
                  <label class="flex flex-1 items-center px-[5px]"><svg class="h-1.5 w-[5px]"><use href="#lt"/></svg><input class="w-0 flex-1 bg-transparent text-center outline-none" value=": 1.000" aria-label="Соотношение Y"><svg class="h-1.5 w-[5px]"><use href="#rt"/></svg></label>
                </div>
                <div class="flex h-5 items-center gap-6 pt-0.5 pl-[3px]"><input type="checkbox" class="size-3.5 appearance-none rounded border border-[#2b2b2b] bg-linear-to-b from-[#484848] to-[#5a5a5a]" aria-label="Область"><input type="checkbox" disabled class="size-3.5 appearance-none rounded border border-[#4b4b4b] bg-[#646464]" aria-label="Обрезка"></div>
              </div>
              <div>
                <label class="relative block h-[21px]"><select class="h-full w-full appearance-none rounded border border-[#1e1e1e] bg-linear-to-b from-[#555] to-[#3a3a3a] pl-[7px] text-white" aria-label="Частота кадров"><option>24 fps</option></select><svg class="pointer-events-none absolute top-[3px] right-[3px] h-3.5 w-2"><use href="#ud"/></svg></label>
                <p class="h-5 pt-0.5 pl-[7px]">Перерасп...</p>
                <div class="flex h-5 overflow-hidden rounded-full border border-[#2b2b2b] bg-[#a6a6a6]">
                  <label class="flex flex-1 items-center border-r border-[#2b2b2b] px-[5px]"><svg class="h-1.5 w-[5px]"><use href="#lt"/></svg><input class="w-0 flex-1 bg-transparent outline-none" aria-label="Старый"><svg class="h-1.5 w-[5px]"><use href="#rt"/></svg></label>
                  <label class="flex flex-1 items-center px-[5px]"><svg class="h-1.5 w-[5px]"><use href="#lt"/></svg><input class="w-0 flex-1 bg-transparent text-center font-['DejaVu_Sans'] outline-none" value="1" aria-label="Новый"><svg class="h-1.5 w-[5px]"><use href="#rt"/></svg></label>
                </div>
              </div>
            </div>
          </section>

          <section class="border-t border-[#3f3f3f]">
            <h2 class="flex h-[27px] items-center pr-[5px] pl-[7px] text-xs"><svg class="mr-1 h-[9px] w-[10px]"><use href="#down"/></svg><label class="flex flex-1 items-center gap-1.5"><span class="relative flex"><input type="checkbox" checked class="size-3.5 appearance-none rounded border border-[#2b2b2b] bg-linear-to-b from-[#484848] to-[#5a5a5a]"><svg class="pointer-events-none absolute -top-1 left-px size-4" viewBox="0 0 16 16"><path d="m2 9 3.500 4L12.500 3" fill="none" stroke="#f0f0f0" stroke-width="2.200"/></svg></span>Сглаживание</label><svg class="h-1.5 w-3"><use href="#grip"/></svg></h2>
            <div class="mx-[3px] mt-[5px] grid grid-cols-2 gap-x-2 gap-y-px">
              <div class="grid h-[21px] grid-cols-4 gap-px overflow-hidden rounded border border-[#1e1e1e] bg-[#1e1e1e] font-['DejaVu_Sans',sans-serif] text-white"><button class="bg-linear-to-b from-[#585858] to-[#3f3f3f]">5</button><button class="bg-linear-to-b from-[#4872b8] to-[#5e8cd2] text-black">8</button><button class="bg-linear-to-b from-[#585858] to-[#3f3f3f]">11</button><button class="bg-linear-to-b from-[#585858] to-[#3f3f3f]">16</button></div>
              <label class="relative block h-[21px]"><select class="h-full w-full appearance-none rounded border border-[#1e1e1e] bg-linear-to-b from-[#555] to-[#3a3a3a] pl-[7px] text-white" aria-label="Фильтр сглаживания"><option>Митчел..</option></select><svg class="pointer-events-none absolute top-[3px] right-[3px] h-3.5 w-2"><use href="#ud"/></svg></label>
              <label class="flex h-[21px] items-center gap-2 pl-[3px]"><input type="checkbox" class="size-3.5 appearance-none rounded border border-[#2b2b2b] bg-linear-to-b from-[#484848] to-[#5a5a5a]">Все с..</label>
              <label class="flex h-[21px] items-center rounded-full border border-[#2b2b2b] bg-[#a6a6a6] px-[5px]"><svg class="h-1.5 w-[5px]"><use href="#lt"/></svg><input class="w-0 flex-1 bg-transparent text-center font-['DejaVu_Sans'] outline-none" value="1.000 p" aria-label="Размер фильтра"><svg class="h-1.5 w-[5px]"><use href="#rt"/></svg></label>
            </div>
          </section>

          <section class="relative mt-1.5 border-y border-[#3f3f3f]">
            <h2 class="flex h-[23px] items-center pl-[7px] text-xs"><svg class="mr-1 h-[9px] w-[10px] shrink-0"><use href="#right"/></svg><label class="flex items-center gap-1.5"><input type="checkbox" class="size-3.5 shrink-0 appearance-none rounded border border-[#2b2b2b] bg-linear-to-b from-[#484848] to-[#5a5a5a]">Размытие при движении</label></h2>
            <svg class="absolute top-2.5 right-[5px] h-1.5 w-3"><use href="#grip"/></svg>
          </section>
        </div>
        <div class="my-[5px] mr-1 ml-[5px] w-[13px] shrink-0 rounded-full border border-[#474747] bg-linear-to-r from-[#505050] to-[#5f5f5f]"><div class="-m-px h-[270px] w-[13px] rounded-full border border-[#303030] bg-linear-to-r from-[#999] to-[#808080]"></div></div>
        <svg class="absolute bottom-0 left-0 size-3"><use href="#cornerbl"/></svg>
      </div>
    </div>
  </div>
</main>

<!-- Taskbar -->
<nav class="relative flex h-[37px] shrink-0 items-stretch bg-[#060607] text-xs text-white">
  <button class="flex w-9 items-center justify-center pt-1.5" aria-label="Пуск"><svg class="size-4" viewBox="0 0 16 16"><path d="M0 2.300 6.500 1.400V7.500H0zM7.500 1.200 16 0v7.500H7.500zM0 8.500h6.500v6.100L0 13.700zM7.500 8.500H16V16l-8.500-1.200z" fill="#fff"/></svg></button>
  <button class="flex w-[37px] items-center justify-center pt-1.5" aria-label="Поиск"><svg class="size-[18px]" viewBox="0 0 18 18"><circle cx="11" cy="6.500" r="5.200" fill="none" stroke="#fff" stroke-width="1.300"/><path d="M7.500 10.500 1 17" stroke="#fff" stroke-width="1.300"/></svg></button>
  <button class="flex w-[37px] items-center justify-center pt-1.5" aria-label="Почта"><svg class="size-4" viewBox="0 0 16 16"><path d="M0 6 8 1l8 5v9H0z" fill="#fff"/><path d="M1 6h14L8.500 11z" fill="#060607"/><path d="M1.500 6 10 8.500" stroke="#060607"/></svg></button>
  <button class="flex w-[37px] items-center justify-center pt-1.5" aria-label="Edge"><svg class="size-[18px]" viewBox="0 0 18 18"><path d="M1 8C2 2.500 6 .5 9.500.5c5 0 7.500 3.500 7.500 8V11H6.500c.3 4 6 4.500 9.500 2v3.300C11 19 2.500 18 2.500 11 2.500 8 4.500 6 6.500 5 4 5.300 2 6.500 1 8zm5.500-.5h5.500C12 3.500 7 3.500 6.500 7.500z" fill="#1181de"/></svg></button>
  <button class="flex w-[37px] items-center justify-center pt-1.5" aria-label="Магазин"><svg class="size-4" viewBox="0 0 16 16"><path d="M5 5V3q0-2.500 3-2.500T11 3v2" fill="none" stroke="#ddd" stroke-width="1.300"/><path d="M0 4h16v12H0z" fill="#fff"/><path d="M4 6h3.500v3.500H4z" fill="#e8532a"/><path d="M8.500 6H12v3.500H8.500z" fill="#7fba00"/><path d="M4 10.500h3.500V14H4z" fill="#00a4ef"/><path d="M8.500 10.500H12V14H8.500z" fill="#ffb900"/></svg></button>
  <button class="flex w-[37px] items-center justify-center pt-1.5" aria-label="Проводник"><svg class="h-4 w-[17px]" viewBox="0 0 17 16"><path d="M0 1h7l1.500 2H16v12H0z" fill="#f5cf66"/><path d="M0 4.500h16V15H0z" fill="#fbe08a"/><path d="M3 15V8h11v7h-2.500v-3.500h-6V15z" fill="#3fa3e0"/></svg></button>
  <button class="flex w-[37px] items-center justify-center pt-1.5" aria-label="Word"><span class="flex size-4 items-center justify-center border border-[#9bbbe8] bg-[#2b579a] text-xs leading-none font-bold">W</span></button>
  <button class="flex w-[37px] items-center justify-center pt-1.5" aria-label="Firefox"><svg class="size-[17px]" viewBox="0 0 17 17"><circle cx="8.500" cy="9" r="7.800" fill="#ff8a1e"/><path d="M9 0q7 3 7.500 9c0 5-4 8-8 8 5-2 6-8 1-12z" fill="#ffcf2e"/><path d="M1 5q-1 8 5 11 6 1.500 8-4-4 4-8 1T5 6q-2 0-4-1z" fill="#e8303c"/><circle cx="8.500" cy="8.500" r="3.600" fill="#2b50b8"/><path d="M4 6q4-2 5 1-3 0-3 2z" fill="#ff9a24"/></svg></button>
  <button class="flex w-[37px] items-center justify-center pt-1.5" aria-label="Blender"><svg class="h-4 w-[18px]"><use href="#blender"/></svg></button>
  <div class="flex flex-1 items-center justify-end pt-1.5">
    <svg class="mr-[15px] size-4" viewBox="0 0 16 16"><g fill="none" stroke="#fff" stroke-width="1.200"><circle cx="11" cy="4" r="2.800"/><circle cx="5" cy="7.500" r="2.300"/><path d="M1 15q0-4.500 4-4.500T9 14M8.500 8q4-2.500 6.500 3"/></g></svg>
    <svg class="mr-2.5 h-2 w-3" viewBox="0 0 12 8"><path d="m.5 7 5.500-5.500L11.500 7" fill="none" stroke="#fff" stroke-width="1.300"/></svg>
    <svg class="mr-2.5 h-3 w-4" viewBox="0 0 16 12"><path d="M5 3.500h9.500v7h-9.500zM15.500 5.500v3" fill="none" stroke="#fff"/><path d="M7 5h6v4H7z" fill="#fff"/><path d="M1 0v2M4 0v2M0 2.500h5v2q-2.500 2-5 0zM2.500 5v5H5" fill="none" stroke="#fff"/></svg>
    <svg class="mr-[9px] size-[13px]" viewBox="0 0 13 13"><g fill="none" stroke="#fff"><path d="M1 12Q1 2 12 1.500" opacity=".6"/><path d="M4 12Q4 5.500 12 5"/><path d="M7 12q0-3.500 5-4"/></g><circle cx="11" cy="11.500" r="1.300" fill="#fff"/></svg>
    <svg class="mr-3 h-3.5 w-4" viewBox="0 0 16 14"><path d="M.5 4.500h2.500l3.500-3.500v12L3 9.500H.5zM9 5q1 2 0 4M11 3q2.300 4 0 8" fill="none" stroke="#fff"/><path d="M13 1q3.500 6 0 12" fill="none" stroke="#888"/></svg>
    <span class="mr-[15px]">РУС</span><time class="mr-[18px]">2:09</time>
    <svg class="mr-5 size-[17px]" viewBox="0 0 17 17"><path d="M0 1h16v12h-6l-3 3v-3H0z" fill="#fff"/><path d="M3 4h10M3 6.500h10M3 9h6" stroke="#060607"/><circle cx="13" cy="13" r="3.500" fill="#fff" stroke="#060607"/><path d="m11 11 4 4" stroke="#060607"/></svg>
    <i class="-mt-1.5 mr-[3px] h-[30px] w-px self-end bg-[#555]"></i>
  </div>
  <div class="pointer-events-none absolute bottom-0 left-[227px] flex gap-[9px]"><i class="h-0.5 w-7 bg-[#a6f0d0]"></i><i class="h-0.5 w-7 bg-[#a6f0d0]"></i><i class="h-0.5 w-7 bg-[#a6f0d0]"></i></div>
</nav>

<script>
  // Ground plane: a 16 x 16 grid in perspective; u and v run from -1 to 1.
  const project = (u, v) => {
    const w = 1 - 0.29987 * u - 0.30543 * v;
    return ((10.32 * u - 408.29 * v + 670) / w).toFixed(1) + ' ' + ((14 * u + 21.26 * v + 348.46) / w).toFixed(1);
  };
  let d = '';
  for (let i = -8; i <= 8; i++) {
    if (i === 0) continue;
    d += `M${project(i / 8, -1)}L${project(i / 8, 1)}M${project(-1, i / 8)}L${project(1, i / 8)}`;
  }
  document.getElementById('grid').setAttribute('d', d);

  // Timeline ticks and frame numbers
  const x = f => Math.round(199 + f * 3.407);
  let t10 = '', t20 = '', text = '';
  for (let f = -50; f <= 280; f += 10) {
    const m = `M${x(f) + 0.5} 0V20`;
    if (f % 20) { t10 += m; continue; }
    t20 += m;
    text += `<text x="${x(f) - (f === 280 ? 5 : 0)}" y="11">${f}</text>`;
  }
  document.getElementById('tick10').setAttribute('d', t10);
  document.getElementById('tick20').setAttribute('d', t20);
  document.getElementById('labels').innerHTML = text;
</script>
</body>
</html>
